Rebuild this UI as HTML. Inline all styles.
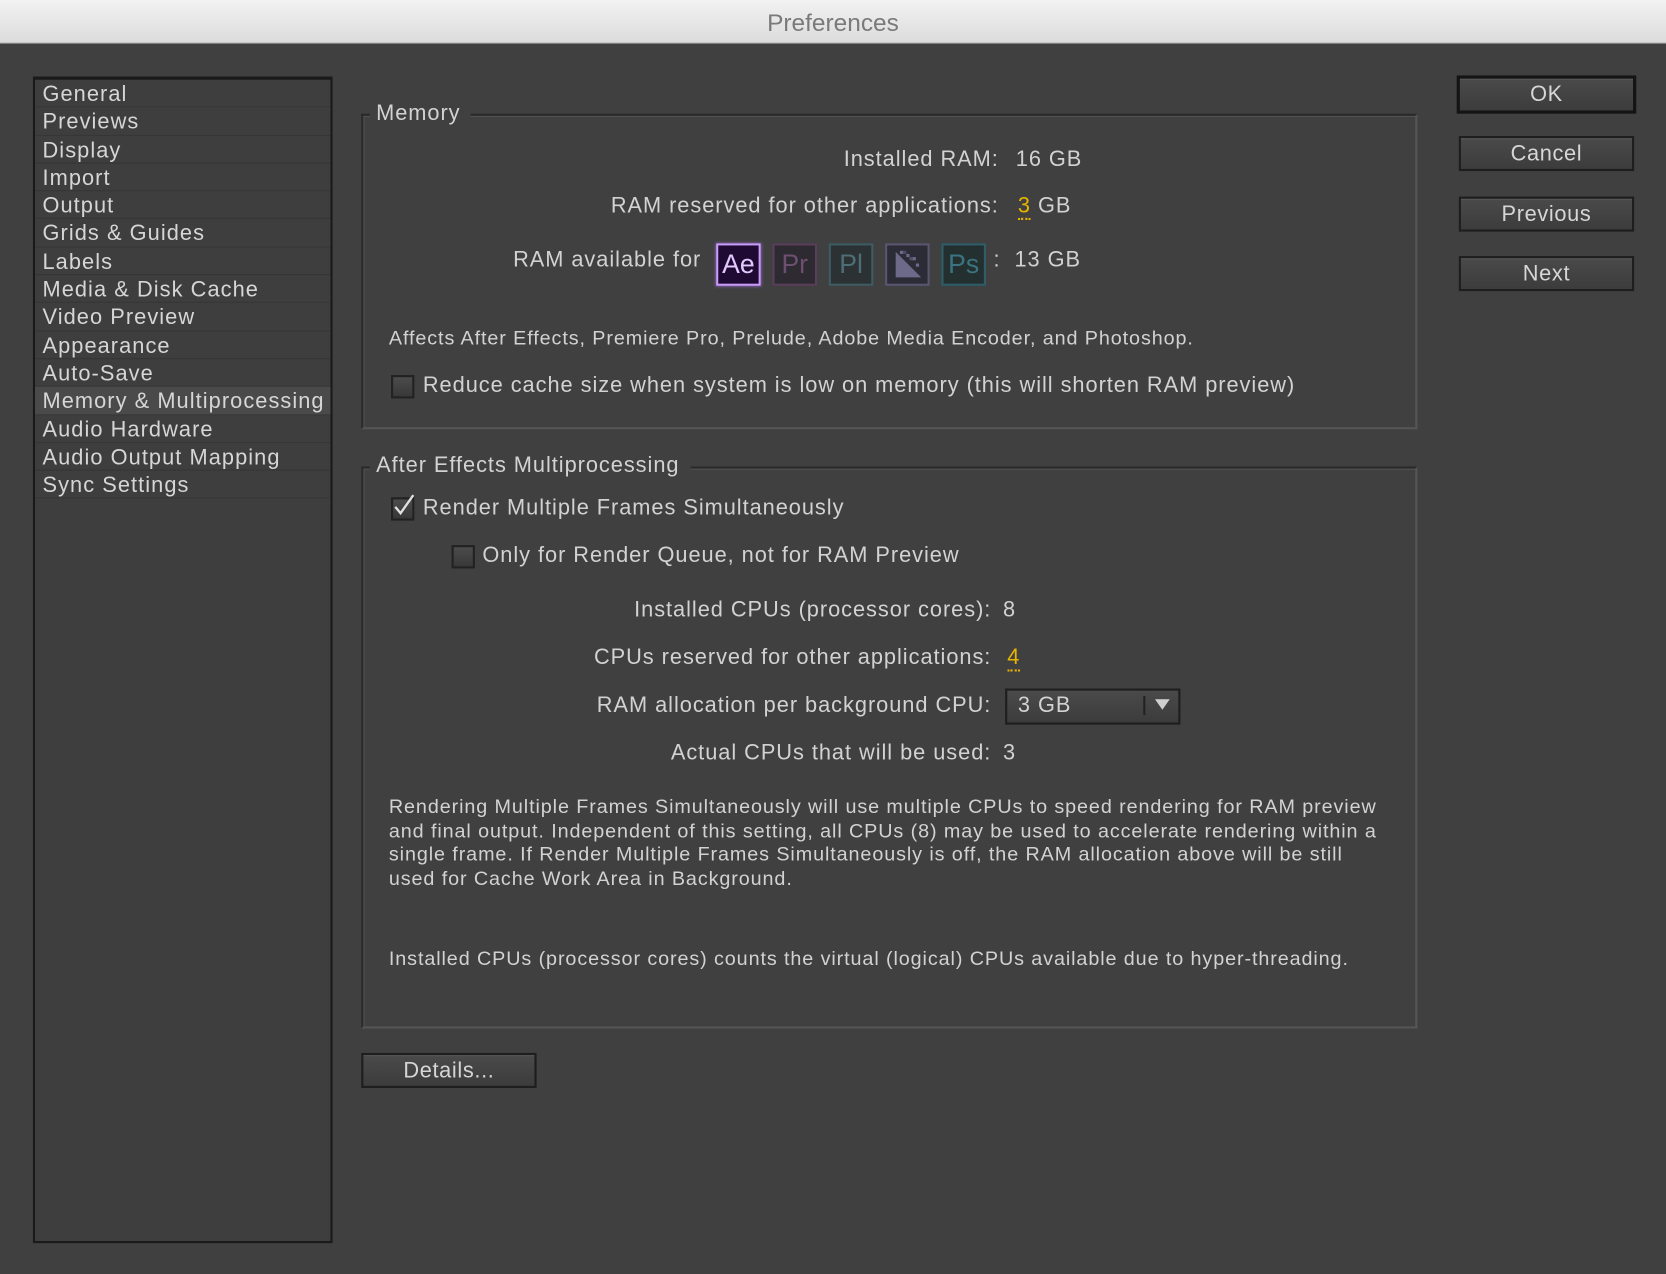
<!DOCTYPE html>
<html><head><meta charset="utf-8"><style>
html,body{margin:0;padding:0;width:1666px;height:1274px;overflow:hidden;background:#404040;}
#w{position:absolute;left:0;top:0;width:1568px;height:1199px;transform:scale(1.0625);transform-origin:0 0;font-family:"Liberation Sans",sans-serif;color:#d2d2d2;}
.a{position:absolute;white-space:nowrap;}
#title{position:absolute;left:0;top:0;width:1568px;height:40px;background:linear-gradient(#f2f2f2,#dcdcdc);border-bottom:1px solid #b0b0b0;text-align:center;line-height:42px;font-size:23px;color:#7a7a7a;}
#side{position:absolute;left:31px;top:72px;width:278px;height:1093px;border:2px solid #1a1a1a;border-top-width:3px;background:#3e3e3e;}
.it{height:25.3px;border-bottom:1px solid #363636;font-size:20.5px;line-height:27px;padding-left:7px;color:#d6d6d6;letter-spacing:1px;white-space:nowrap;}
.sel{background:#4a4a4a;}
.grp{position:absolute;border:2px solid #2a2a2a;border-right-color:#555;border-bottom-color:#555;box-shadow:inset 1px 1px 0 #555;}
.gl{position:absolute;background:#404040;padding:0 10px 0 6px;font-size:20.5px;letter-spacing:0.9px;}
.btn{position:absolute;border:2px solid #1e1e1e;background:linear-gradient(#4a4a4a,#3c3c3c);box-shadow:inset 0 1px 0 #5a5a5a;text-align:center;font-size:20.5px;line-height:29px;color:#d6d6d6;letter-spacing:0.6px;}
.cb{position:absolute;width:18px;height:18px;border:2px solid #222;background:linear-gradient(#4c4c4c,#383838);}
.l{font-size:20.5px;letter-spacing:0.9px;}
.p{font-size:18.6px;letter-spacing:0.85px;}
.y{color:#e8b400;border-bottom:2px dotted #e8b400;line-height:20px;}
.ic{position:absolute;top:229px;width:38px;height:36px;border:2px solid;font-size:25px;line-height:36px;text-align:center;}
</style></head><body><div id="w">
<div id="title">Preferences</div>
<div id="side">
<div class="it">General</div><div class="it">Previews</div><div class="it">Display</div><div class="it">Import</div><div class="it">Output</div><div class="it">Grids &amp; Guides</div><div class="it">Labels</div><div class="it">Media &amp; Disk Cache</div><div class="it">Video Preview</div><div class="it">Appearance</div><div class="it">Auto-Save</div><div class="it sel">Memory &amp; Multiprocessing</div><div class="it">Audio Hardware</div><div class="it">Audio Output Mapping</div><div class="it">Sync Settings</div>
</div>

<div class="grp" style="left:340px;top:107px;width:990px;height:293px;"></div>
<div class="gl" style="left:348px;top:95px;">Memory</div>
<div class="a l" style="right:628px;top:138px;">Installed RAM:</div>
<div class="a l" style="left:956px;top:138px;">16 GB</div>
<div class="a l" style="right:628px;top:182px;">RAM reserved for other applications:</div>
<div class="a l" style="left:958px;top:182px;"><span class="y">3</span> GB</div>
<div class="a l" style="right:908px;top:233px;">RAM available for</div>
<div class="ic" style="left:674px;border-color:#c89cf8;background:#1e0a33;color:#e4c8ff;box-shadow:0 0 3px #9a6ad0;">Ae</div>
<div class="ic" style="left:727px;border-color:#5a3e5a;background:#2e2a32;color:#6d4f70;">Pr</div>
<div class="ic" style="left:780px;border-color:#3e5c62;background:#2c3234;color:#4d6e74;">Pl</div>
<div class="ic" style="left:833px;border-color:#5a5670;background:#2c2c36;"><svg width="38" height="36"><polygon points="6,4 30,4 30,32 6,32" fill="#2c2c36"/><polygon points="8,6 8,30 32,30" fill="#6c6a88"/><g fill="#6c6a88"><rect x="12" y="5" width="3" height="3"/><rect x="18" y="8" width="3" height="3"/><rect x="24" y="11" width="3" height="3"/><rect x="15" y="5" width="3" height="3" opacity=".5"/><rect x="21" y="11" width="3" height="3" opacity=".6"/><rect x="27" y="17" width="3" height="3"/></g></svg></div>
<div class="ic" style="left:886px;border-color:#2f5e6a;background:#23302f;color:#3b7480;">Ps</div>
<div class="a l" style="left:935px;top:233px;">:&nbsp; 13 GB</div>
<div class="a p" style="left:366px;top:307px;">Affects After Effects, Premiere Pro, Prelude, Adobe Media Encoder, and Photoshop.</div>
<div class="cb" style="left:368px;top:353px;"></div>
<div class="a l" style="left:398px;top:351px;">Reduce cache size when system is low on memory (this will shorten RAM preview)</div>

<div class="grp" style="left:340px;top:439px;width:990px;height:525px;"></div>
<div class="gl" style="left:348px;top:426px;">After Effects Multiprocessing</div>
<div class="cb" style="left:368px;top:468px;"><svg width="22" height="22" style="position:absolute;left:-1px;top:-6px"><path d="M3 13 L8 19 L20 2" stroke="#e0e0e0" stroke-width="2.2" fill="none"/></svg></div>
<div class="a l" style="left:398px;top:466px;">Render Multiple Frames Simultaneously</div>
<div class="cb" style="left:425px;top:513px;"></div>
<div class="a l" style="left:454px;top:511px;">Only for Render Queue, not for RAM Preview</div>
<div class="a l" style="right:635px;top:562px;">Installed CPUs (processor cores):</div>
<div class="a l" style="left:944px;top:562px;">8</div>
<div class="a l" style="right:635px;top:607px;">CPUs reserved for other applications:</div>
<div class="a l" style="left:948px;top:607px;"><span class="y">4</span></div>
<div class="a l" style="right:635px;top:652px;">RAM allocation per background CPU:</div>
<div style="position:absolute;left:946px;top:648px;width:161px;height:30px;border:2px solid #1e1e1e;background:linear-gradient(#4a4a4a,#3c3c3c);"></div>
<div class="a l" style="left:958px;top:652px;">3 GB</div>
<div style="position:absolute;left:1076px;top:655px;width:2px;height:18px;background:#222;"></div>
<svg class="a" style="left:1087px;top:658px" width="14" height="10"><polygon points="0,0 14,0 7,10" fill="#d0d0d0"/></svg>
<div class="a l" style="right:635px;top:697px;">Actual CPUs that will be used:</div>
<div class="a l" style="left:944px;top:697px;">3</div>
<div class="a p" style="left:366px;top:748px;line-height:22.5px;">Rendering Multiple Frames Simultaneously will use multiple CPUs to speed rendering for RAM preview<br>and final output. Independent of this setting, all CPUs (8) may be used to accelerate rendering within a<br>single frame. If Render Multiple Frames Simultaneously is off, the RAM allocation above will be still<br>used for Cache Work Area in Background.</div>
<div class="a p" style="left:366px;top:891px;">Installed CPUs (processor cores) counts the virtual (logical) CPUs available due to hyper-threading.</div>

<div class="btn" style="left:340px;top:991px;width:161px;height:29px;">Details...</div>
<div class="btn" style="left:1371px;top:71px;width:163px;height:30px;border-width:3px;border-color:#141414;">OK</div>
<div class="btn" style="left:1373px;top:128px;width:161px;height:29px;">Cancel</div>
<div class="btn" style="left:1373px;top:185px;width:161px;height:29px;">Previous</div>
<div class="btn" style="left:1373px;top:241px;width:161px;height:29px;">Next</div>
</div></body></html>
